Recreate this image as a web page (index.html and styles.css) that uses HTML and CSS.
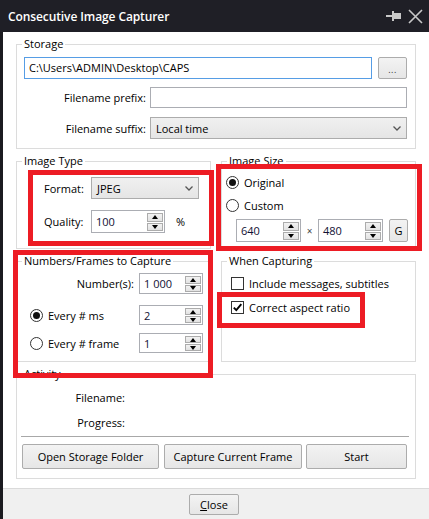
FILE: index.html
```html
<!DOCTYPE html>
<html>
<head>
<meta charset="utf-8">
<link rel="stylesheet" href="styles.css">
</head>
<body>
<div class="window">
  <div class="titlebar">
    <div class="title">Consecutive Image Capturer</div>
    <div class="tb-icons">
      <svg class="pin" width="16" height="12" viewBox="0 0 16 12"><rect x="0" y="5" width="6" height="2" fill="#c8c8c8"/><rect x="6" y="1" width="2" height="10" fill="#c8c8c8"/><rect x="8" y="3" width="7" height="6" fill="#c8c8c8"/></svg>
      <svg class="close-x" width="15" height="15" viewBox="0 0 15 15"><path d="M1 1 L14 14 M14 1 L1 14" stroke="#c8c8c8" stroke-width="1.6" fill="none"/></svg>
    </div>
  </div>
  <div class="frame">
    <div class="client">
      <fieldset class="group storage">
        <legend>Storage</legend>
        <div class="gbody storage-body">
          <div class="path-row">
            <div class="textbox focused">C:\Users\ADMIN\Desktop\CAPS</div>
            <div class="btn browse">...</div>
          </div>
          <div class="form-grid">
            <div class="lbl">Filename prefix:</div>
            <div class="textbox prefix"></div>
            <div class="lbl">Filename suffix:</div>
            <div class="combo suffix"><span>Local time</span><svg width="8" height="5" viewBox="0 0 8 5"><path d="M0.5 0.5 L4 4 L7.5 0.5" stroke="#555" stroke-width="1.3" fill="none"/></svg></div>
          </div>
        </div>
      </fieldset>

      <div class="cols">
        <fieldset class="group">
          <legend>Image Type</legend>
          <div class="gbody type-body">
            <div class="lbl-l">Format:</div>
            <div class="combo format"><span>JPEG</span><svg width="8" height="5" viewBox="0 0 8 5"><path d="M0.5 0.5 L4 4 L7.5 0.5" stroke="#555" stroke-width="1.3" fill="none"/></svg></div>
            <div class="lbl-l">Quality:</div>
            <div class="quality-row">
              <div class="spin quality"><span class="val">100</span><span class="btns"><span class="sb up"></span><span class="sb down"></span></span></div>
              <span class="pct">%</span>
            </div>
          </div>
        </fieldset>

        <fieldset class="group">
          <legend>Image Size</legend>
          <div class="gbody size-body">
            <div class="opt"><span class="radio checked"></span><span>Original</span></div>
            <div class="opt"><span class="radio"></span><span>Custom</span></div>
            <div class="size-row">
              <div class="spin dim"><span class="val">640</span><span class="btns"><span class="sb up"></span><span class="sb down"></span></span></div>
              <span class="times">×</span>
              <div class="spin dim"><span class="val">480</span><span class="btns"><span class="sb up"></span><span class="sb down"></span></span></div>
              <div class="btn gbtn">G</div>
            </div>
          </div>
        </fieldset>

        <fieldset class="group">
          <legend>Numbers/Frames to Capture</legend>
          <div class="gbody num-body">
            <div class="lbl">Number(s):</div>
            <div class="spin n1"><span class="val">1 000</span><span class="btns"><span class="sb up"></span><span class="sb down"></span></span></div>
            <div class="opt"><span class="radio checked"></span><span>Every # ms</span></div>
            <div class="spin n2"><span class="val">2</span><span class="btns"><span class="sb up"></span><span class="sb down"></span></span></div>
            <div class="opt"><span class="radio"></span><span>Every # frame</span></div>
            <div class="spin n2"><span class="val">1</span><span class="btns"><span class="sb up"></span><span class="sb down"></span></span></div>
          </div>
        </fieldset>

        <fieldset class="group">
          <legend>When Capturing</legend>
          <div class="gbody when-body">
            <div class="opt"><span class="check"></span><span>Include messages, subtitles</span></div>
            <div class="opt"><span class="check"><svg width="11" height="11" viewBox="0 0 11 11"><path d="M1.8 5.6 L4.3 8.2 L9.3 2.2" stroke="#000" stroke-width="1.9" fill="none"/></svg></span><span>Correct aspect ratio</span></div>
          </div>
        </fieldset>
      </div>

      <fieldset class="group activity">
        <legend>Activity</legend>
        <div class="gbody act-body">
          <div class="act-grid">
            <div class="lbl">Filename:</div><div></div>
            <div class="lbl">Progress:</div><div></div>
          </div>
          <div class="sep"></div>
          <div class="act-btns">
            <div class="btn b1">Open Storage Folder</div>
            <div class="btn b2">Capture Current Frame</div>
            <div class="btn b3">Start</div>
          </div>
        </div>
      </fieldset>
    </div>
    <div class="footer">
      <div class="btn closebtn"><u>C</u>lose</div>
    </div>
  </div>

  <div class="mark m-type"></div>
  <div class="mark m-size"></div>
  <div class="mark m-num"></div>
  <div class="mark m-aspect"></div>
</div>
</body>
</html>
```

FILE: styles.css
```css
* { box-sizing: border-box; }
html, body { margin: 0; padding: 0; }
body {
  background: #1e1e24;
  font-family: "Open Sans", "Noto Sans", sans-serif;
  font-size: 11px;
  color: #000;
}
.window {
  position: relative;
  width: 429px;
  height: 519px;
  display: flex;
  flex-direction: column;
  background: #1b1b20;
  overflow: hidden;
}
.titlebar {
  height: 32px;
  flex: none;
  display: flex;
  align-items: center;
  padding: 0 6px 0 8px;
  background: #1f1f26;
  color: #fff;
}
.title { flex: 1; font-weight: 600; font-size: 12px; letter-spacing: -0.1px; }
.tb-icons { display: flex; align-items: center; gap: 6px; margin-right: 0; }
.frame {
  flex: 1;
  display: flex;
  flex-direction: column;
  margin-left: 3px;
  background: #fff;
}
.client {
  flex: 1;
  padding: 4px 13px 9px 13px;
  display: flex;
  flex-direction: column;
}
.group {
  margin: 0;
  padding: 0;
  border: 1px solid #dcdcdc;
  min-width: 0;
}
.group legend {
  margin-left: 5px;
  padding: 0 2px;
  line-height: 16px;
  font-size: 11px;
}
.storage { height: 113px; }
.storage-body { padding: 5px 8px 0 7px; }
.path-row { display: flex; gap: 6px; height: 22px; }
.textbox {
  border: 1px solid #abadb3;
  background: #fff;
  height: 21px;
  padding: 0 4px;
  line-height: 19px;
  white-space: nowrap;
}
.textbox.focused { flex: 1; height: 22px; border-color: #569de5; line-height: 20px; }
.btn {
  border: 1px solid #acacac;
  border-radius: 2px;
  background: linear-gradient(#f3f3f3, #e6e6e6);
  display: flex;
  align-items: center;
  justify-content: center;
  white-space: nowrap;
}
.browse { width: 29px; height: 22px; font-size: 9px; letter-spacing: 0.5px; padding-top: 3px; color: #333; }
.form-grid {
  display: grid;
  grid-template-columns: 122px 1fr;
  column-gap: 4px;
  align-items: center;
  margin-top: 8px;
  row-gap: 9px;
}
.lbl { text-align: right; }
.combo {
  border: 1px solid #acacac;
  background: linear-gradient(#f0f0f0, #e5e5e5);
  height: 22px;
  display: flex;
  align-items: center;
  padding: 0 5px 0 5px;
}
.combo span { flex: 1; }
.combo svg { flex: none; }
.suffix { height: 22px; }

.cols {
  margin-top: 4px;
  display: grid;
  grid-template-columns: 195px 195px;
  grid-template-rows: 96px 109px;
  column-gap: 10px;
  row-gap: 4px;
}
.type-body {
  padding: 8px 0 0 27px;
  display: grid;
  grid-template-columns: 47px 108px;
  grid-template-rows: 22px 23px;
  row-gap: 11px;
  align-items: center;
}
.format { height: 22px; }
.quality-row { display: flex; align-items: center; gap: 11px; width: 120px; }
.spin {
  display: flex;
  border: 1px solid #abadb3;
  background: #fff;
  height: 23px;
}
.spin .val { flex: 1; padding-left: 4px; display: flex; align-items: center; color: #111133; }
.spin .btns {
  width: 17px;
  display: flex;
  flex-direction: column;
  gap: 1px;
  padding: 2px 1px 1px 0;
}
.sb {
  flex: 1;
  border: 1px solid #acacac;
  background: linear-gradient(#f2f2f2, #e2e2e2);
  display: flex;
  align-items: center;
  justify-content: center;
}
.sb.up::after {
  content: "";
  border-left: 3px solid transparent;
  border-right: 3px solid transparent;
  border-bottom: 4px solid #000;
}
.sb.down::after {
  content: "";
  border-left: 3px solid transparent;
  border-right: 3px solid transparent;
  border-top: 4px solid #000;
}
.quality { width: 74px; }
.pct { font-size: 11px; }

.size-body { padding: 4px 0 0 4px; display: flex; flex-direction: column; gap: 5px; }
.opt { display: flex; align-items: center; gap: 5px; height: 18px; }
.radio {
  width: 13px; height: 13px;
  border: 1px solid #333;
  border-radius: 50%;
  background: #fff;
  display: flex; align-items: center; justify-content: center;
  flex: none;
}
.radio.checked::after {
  content: "";
  width: 7px; height: 7px;
  border-radius: 50%;
  background: #111;
}
.size-row { display: flex; align-items: center; margin-left: 10px; height: 23px; }
.dim { width: 65px; }
.times { width: 17px; text-align: center; font-size: 10px; color: #444; }
.gbtn { width: 19px; height: 23px; margin-left: 6px; font-size: 11px; }

.num-body {
  padding: 4px 7px 0 13px;
  display: grid;
  grid-template-columns: 1fr 64px;
  grid-template-rows: 21px 20px 20px;
  column-gap: 5px;
  row-gap: 0;
  align-items: center;
}
.num-body .spin { height: 100%; }
.num-body > :nth-child(3), .num-body > :nth-child(4) { margin-top: 11px; }
.num-body > :nth-child(5), .num-body > :nth-child(6) { margin-top: 8px; }
.num-body { grid-template-rows: 21px 31px 28px; }
.num-body > .spin.n2 { height: 20px; align-self: end; }
.num-body > .opt { align-self: end; height: 20px; }

.when-body { padding: 6px 0 0 9px; display: flex; flex-direction: column; gap: 8px; }
.when-body .opt { height: 16px; gap: 5px; }
.check {
  width: 13px; height: 13px;
  border: 1px solid #333;
  background: #fff;
  flex: none;
  display: flex; align-items: center; justify-content: center;
}

.activity { height: 113px; margin-top: 4px; }
.act-body { padding: 7px 8px 0 5px; }
.act-grid {
  display: grid;
  grid-template-columns: 103px 1fr;
  grid-auto-rows: 16px;
  row-gap: 9px;
  align-items: center;
}
.sep { height: 1px; background: #a8a8a8; margin: 6px -2px 0 -1px; }
.act-btns { display: flex; margin-top: 7px; height: 25px; }
.act-btns .btn { height: 25px; }
.b1 { width: 137px; }
.b2 { width: 138px; margin-left: 5px; }
.b3 { flex: 1; margin-left: 4px; }

.footer {
  height: 31px;
  flex: none;
  border-top: 1px solid #dadada;
  background: #f0f0f0;
  display: flex;
  justify-content: center;
  align-items: flex-start;
  padding: 5px 4px 0 0;
}
.closebtn { width: 50px; height: 21px; }

.mark {
  position: absolute;
  border: 5px solid #ed1c24;
  pointer-events: none;
}
.m-type { left: 28px; top: 170px; width: 186px; height: 76px; }
.m-size { left: 216px; top: 164px; width: 206px; height: 87px; }
.m-num { left: 13px; top: 250px; width: 200px; height: 128px; }
.m-aspect { left: 217px; top: 292px; width: 148px; height: 36px; }
```
